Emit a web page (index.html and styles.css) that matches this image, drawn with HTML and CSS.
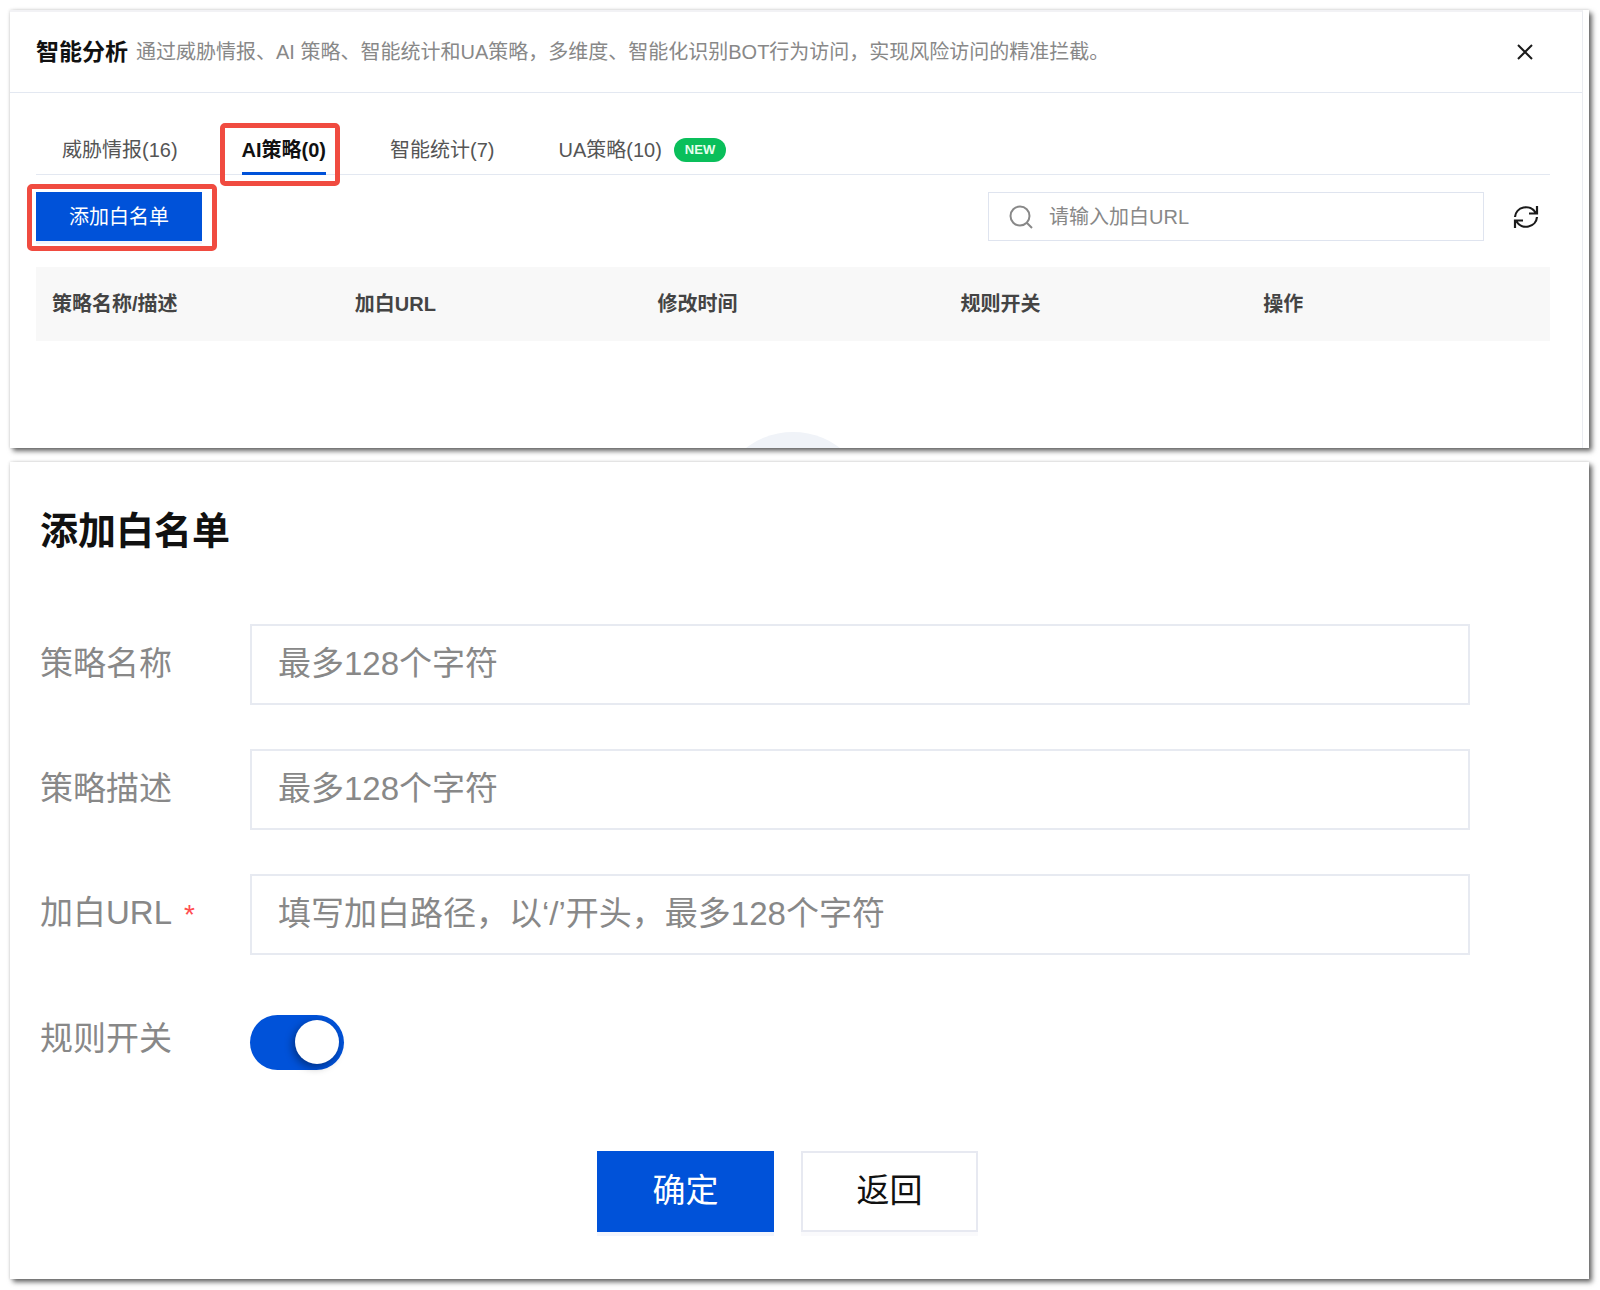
FILE: index.html
```html
<!DOCTYPE html>
<html lang="zh-CN">
<head>
    <meta charset="UTF-8">
    <meta name="viewport" content="width=device-width, initial-scale=1.0">
    <title>智能分析</title>
    <link rel="stylesheet" href="styles.css">
</head>
<body>

    <!-- Strategy list -->
    <section class="panel list-panel">
        <div class="list-inner">
            <header class="list-header">
                <h1 class="list-title">智能分析</h1>
                <p class="list-desc">通过威胁情报、AI 策略、智能统计和UA策略，多维度、智能化识别BOT行为访问，实现风险访问的精准拦截。</p>
                <button class="icon-button" type="button" aria-label="关闭">
                    <svg width="26" height="26" viewBox="0 0 26 26" fill="none" stroke="#1a1a1a" stroke-width="2">
                        <path d="M6 6l14 14M20 6L6 20"/>
                    </svg>
                </button>
            </header>

            <div class="list-body">
                <nav class="tabs">
                    <a class="tab" href="#threat">威胁情报(16)</a>
                    <a class="tab active" href="#ai">AI策略(0)</a>
                    <a class="tab" href="#stat">智能统计(7)</a>
                    <a class="tab" href="#ua">UA策略(10)<span class="badge">NEW</span></a>
                </nav>

                <div class="toolbar">
                    <button class="add-button" type="button">添加白名单</button>
                    <label class="search">
                        <svg width="24" height="24" viewBox="0 0 24 24" fill="none" stroke="#888" stroke-width="2">
                            <circle cx="11" cy="11" r="9.500"/>
                            <path d="M17.500 17.500L23 23"/>
                        </svg>
                        <input type="text" placeholder="请输入加白URL" aria-label="请输入加白URL">
                    </label>
                    <button class="icon-button" type="button" aria-label="刷新">
                        <svg width="26" height="26" viewBox="0 0 26 26" fill="none" stroke="#1a1a1a" stroke-width="2.200">
                            <path d="M2 13A11 10.500 0 0 1 22.500 8.500M24 2v7.500h-8"/>
                            <path d="M24 13A11 10.500 0 0 1 3.500 17.500M2 24v-7.500h8"/>
                        </svg>
                    </button>
                </div>

                <table class="rules">
                    <thead>
                        <tr>
                            <th>策略名称/描述</th>
                            <th>加白URL</th>
                            <th>修改时间</th>
                            <th>规则开关</th>
                            <th>操作</th>
                        </tr>
                    </thead>
                </table>
                <div class="empty"><div class="empty-circle"></div></div>
            </div>
        </div>
    </section>

    <!-- Add whitelist form -->
    <section class="panel form-panel">
        <h2 class="form-title">添加白名单</h2>
        <form>
            <div class="field">
                <label for="name">策略名称</label>
                <input class="text-input" id="name" type="text" placeholder="最多128个字符">
            </div>
            <div class="field">
                <label for="desc">策略描述</label>
                <input class="text-input" id="desc" type="text" placeholder="最多128个字符">
            </div>
            <div class="field">
                <label for="url">加白URL<span class="required">*</span></label>
                <input class="text-input" id="url" type="text" placeholder="填写加白路径，以‘/’开头，最多128个字符">
            </div>
            <div class="field">
                <label for="enabled">规则开关</label>
                <input class="switch" id="enabled" type="checkbox" role="switch" checked>
            </div>
            <div class="actions">
                <button class="button primary" type="button">确定</button>
                <button class="button" type="button">返回</button>
            </div>
        </form>
    </section>

</body>
</html>
```

FILE: styles.css
```css
* {
    box-sizing: border-box;
}

body {
    margin: 0;
    padding: 10px 11px 11px 10px;
    display: flex;
    flex-direction: column;
    gap: 14px;
    background-color: #fff;
    font-family: "Liberation Sans", "Noto Sans CJK SC", sans-serif;
    font-size: 20px;
    line-height: 28px;
    color: #444;
}

button, input {
    font: inherit;
}

input::placeholder {
    color: #888;
    opacity: 1;
}

.panel {
    background-color: #fff;
    box-shadow: 3px 3px 5px rgba(0, 0, 0, 0.6), 0 0 3px rgba(0, 0, 0, 0.15);
}

/* Strategy list */
.list-panel {
    padding-right: 6px;
}

.list-inner {
    border-top: 2px solid #f2f2f5;
    border-right: 1px solid #e9ebf0;
}

.list-header {
    display: flex;
    align-items: center;
    height: 81px;
    padding: 0 44px 0 26px;
    border-bottom: 1px solid #e3e8f1;
}

.list-title {
    margin: 0 8px 0 0;
    font-size: 23px;
    color: #111;
}

.list-desc {
    flex: 1;
    margin: 0;
    color: #888;
}

.icon-button {
    display: flex;
    padding: 0;
    border: none;
    background: none;
    cursor: pointer;
}

.list-body {
    padding: 27px 32px 0 26px;
}

/* Tabs */
.tabs {
    display: flex;
    gap: 64px;
    padding-left: 26px;
    border-bottom: 1px solid #e3e8f1;
}

.tab {
    position: relative;
    display: flex;
    align-items: center;
    height: 54px;
    padding-top: 5px;
    color: #555;
    text-decoration: none;
}

.tab.active {
    margin-bottom: -1px;
    height: 55px;
    padding-top: 7px;
    border-bottom: 3px solid #0052d9;
    font-weight: bold;
    color: #111;
}

/* Red marker frames */
.tab.active::after,
.add-button::after {
    content: "";
    position: absolute;
    border: 5px solid #f04b40;
    border-radius: 5px;
}

.tab.active::after {
    inset: 3px -14px -14px -22px;
}

.add-button::after {
    inset: -8px -15px -10px -9px;
}

.badge {
    margin-left: 12px;
    padding: 0 11px;
    border-radius: 12px;
    background-color: #0abf5b;
    font-size: 13px;
    line-height: 24px;
    font-weight: bold;
    color: #e6ffee;
}

/* Toolbar */
.toolbar {
    display: flex;
    align-items: center;
    padding: 17px 11px 26px 0;
}

.add-button {
    position: relative;
    height: 49px;
    margin-right: auto;
    padding: 0 33px;
    border: none;
    background-color: #0052d9;
    box-shadow: 0 3px 0 #f0f2fa;
    color: #fff;
    cursor: pointer;
}

.search {
    display: flex;
    align-items: center;
    gap: 16px;
    width: 33%;
    height: 49px;
    margin-right: 29px;
    padding: 0 20px;
    border: 1px solid #dfe4ef;
}

.search input {
    flex: 1;
    min-width: 0;
    padding: 0;
    border: none;
    outline: none;
    background: none;
}

/* Table */
.rules {
    width: 100%;
    table-layout: fixed;
    border-collapse: collapse;
}

.rules th {
    height: 74px;
    padding: 0 16px;
    background-color: #f8f8f8;
    text-align: left;
}

/* Only the top of the empty state is visible */
.empty {
    height: 107px;
    padding-top: 91px;
    overflow: hidden;
}

.empty-circle {
    width: 154px;
    height: 154px;
    margin: 0 auto;
    border-radius: 50%;
    background-color: #f0f3f8;
}

/* Form */
.form-panel {
    padding: 45px 54px 47px 30px;
    font-size: 33px;
    line-height: 48px;
}

.form-title {
    margin: 0 0 69px;
    font-size: 38px;
    line-height: 48px;
    color: #111;
}

.field {
    display: flex;
    align-items: center;
    margin: 0 65px 44px 0;
    min-height: 81px;
}

.field label {
    width: 210px;
    padding-bottom: 2px;
    color: #888;
}

.required {
    margin-left: 12px;
    font-size: 28px;
    color: #ff4d4f;
}

.text-input {
    flex: 1;
    min-width: 0;
    height: 81px;
    padding: 0 26px 2px;
    border: 2px solid #e7eaf1;
    background: none;
}

/* Switch */
.switch {
    appearance: none;
    display: flex;
    align-items: center;
    width: 94px;
    height: 55px;
    margin: 5px 0 0;
    padding: 0 5px;
    border-radius: 28px;
    background-color: #c5cad5;
    cursor: pointer;
}

.switch::before {
    content: "";
    width: 44px;
    height: 44px;
    border-radius: 50%;
    background-color: #fff;
    box-shadow: -2px 3px 8px rgba(0, 0, 0, 0.4);
}

.switch:checked {
    justify-content: flex-end;
    background-color: #0052d9;
}

/* Buttons */
.actions {
    display: flex;
    justify-content: center;
    gap: 27px;
    padding-top: 27px;
}

.button {
    width: 177px;
    height: 81px;
    padding: 0 0 2px;
    border: 2px solid #e7e9f1;
    background-color: #fff;
    box-shadow: 0 4px 0 #fafafc;
    color: #111;
    cursor: pointer;
}

.button.primary {
    border-color: #0052d9;
    background-color: #0052d9;
    box-shadow: 0 4px 0 #f2f5fd;
    color: #fff;
}
```
